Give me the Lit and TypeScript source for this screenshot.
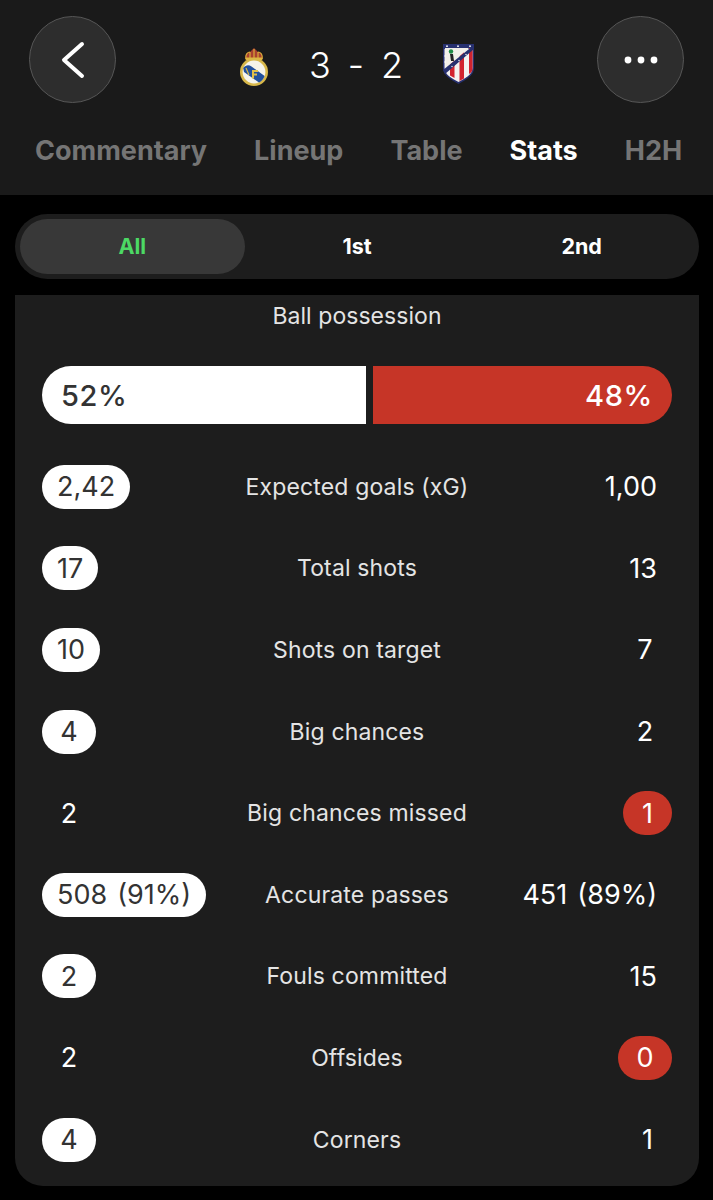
import { LitElement, html, css, svg } from "lit";
import { customElement } from "lit/decorators.js";

type Row = { label: string; a: string; b: string; hl?: "a" | "b" };
const rows: Row[] = [
  { label: "Expected goals (xG)", a: "2,42", b: "1,00", hl: "a" },
  { label: "Total shots", a: "17", b: "13", hl: "a" },
  { label: "Shots on target", a: "10", b: "7", hl: "a" },
  { label: "Big chances", a: "4", b: "2", hl: "a" },
  { label: "Big chances missed", a: "2", b: "1", hl: "b" },
  { label: "Accurate passes", a: "508 (91%)", b: "451 (89%)", hl: "a" },
  { label: "Fouls committed", a: "2", b: "15", hl: "a" },
  { label: "Offsides", a: "2", b: "0", hl: "b" },
  { label: "Corners", a: "4", b: "1", hl: "a" },
];

const realMadrid = svg`<svg class="crest-rm" viewBox="0 0 30 39" width="30" height="39">
  <path d="M7 13 C5.5 7 9 5 11 5 L13 3 L15 1 L17 3 L19 5 C21 5 24.5 7 23 13 Z" fill="#a8402f"/>
  <path d="M7 12 C6 7 9 5 11 5 M23 12 C24 7 21 5 19 5 M15 2 V11 M11 5 V12 M19 5 V12" stroke="#d9a93a" stroke-width="1.2" fill="none"/>
  <rect x="6.5" y="10.5" width="17" height="2.5" rx="1" fill="#e0b640"/>
  <circle cx="15" cy="25" r="14" fill="#d8b84a"/>
  <circle cx="15" cy="25" r="11.4" fill="#f6f4ea"/>
  <path d="M4.2 21 C7 17.5 10 17.5 12.5 19.5 L25.6 29 C24.5 32 22.5 34.5 20 35.6 L5 25 Z" fill="#22509c"/>
  <path d="M13 23 h6 v2 h-4 v1.5 h3 v2 h-3 v3 h-2 Z" fill="#e2c04a"/>
  <path d="M7 21 l3 7" stroke="#d8b84a" stroke-width="1.2"/>
</svg>`;

const atletico = svg`<svg class="crest-atm" viewBox="0 0 31 40" width="31" height="40">
  <path d="M0 0 H31 V24 C31 32 22 36 15.5 40 C9 36 0 32 0 24 Z" fill="#27306f"/>
  <path d="M1.5 24 V5 H29.5 V24 C29.5 31 21 35 15.5 38 C10 35 1.5 31 1.5 24 Z" fill="#f4f2f0"/>
  <path d="M7 31.5 V4 H11.5 V34 Z M16.5 37 V4 H21 V34.5 Z M26 30 V4 H29.5 V25 C29.5 27 28 29 26 30 Z" fill="#d2232f"/>
  <path d="M2 4 H26 L3 24 Z" fill="#f2efe8"/>
  <circle cx="8" cy="7.5" r="2.2" fill="#1f8a45"/>
  <path d="M7 10 h3 l1 7 h-3 Z" fill="#222"/>
  <path d="M0 26 L31 1 V5 L2 30 Z" fill="#27306f"/>
  <g fill="#fff"><circle cx="4" cy="2.2" r=".9"/><circle cx="15" cy="2.2" r=".9"/><circle cx="27" cy="2.2" r=".9"/><circle cx="2" cy="12" r=".7"/><circle cx="2" cy="18" r=".7"/><circle cx="9" cy="22.5" r=".7"/><circle cx="16" cy="16.5" r=".7"/><circle cx="23" cy="10.5" r=".7"/></g>
</svg>`;

@customElement("app-root")
export class AppRoot extends LitElement {
  static styles = css`
    :host {
      display: block;
      width: 713px;
      height: 1200px;
      overflow: hidden;
      background: #000;
      color: #fff;
      font-family: Inter, "Liberation Sans", sans-serif;
    }
    .header {
      height: 195px;
      box-sizing: border-box;
      background: #1a1a1a;
      padding-top: 16px;
      display: flex;
      flex-direction: column;
    }
    .top {
      display: grid;
      grid-template-columns: 1fr auto 1fr;
      align-items: center;
      padding: 0 29px;
      height: 87px;
    }
    .circle {
      width: 87px;
      height: 87px;
      box-sizing: border-box;
      border-radius: 50%;
      background: #2d2d2d;
      border: 1.5px solid #565656;
      display: flex;
      align-items: center;
      justify-content: center;
    }
    .more {
      justify-self: end;
    }
    .match {
      display: flex;
      align-items: center;
    }
    .crest-rm {
      display: block;
      margin-top: 14px;
    }
    .crest-atm {
      display: block;
      margin-top: 9px;
    }
    .score {
      display: flex;
      justify-content: space-between;
      width: 94px;
      margin: 10px 40px 0 40px;
      font-size: 36px;
      font-weight: 300;
      line-height: 44px;
    }
    .tabs {
      display: flex;
      gap: 47px;
      padding-left: 35px;
      margin-top: 30px;
      font-size: 27px;
      font-weight: 700;
      line-height: 36px;
      color: #757575;
      white-space: nowrap;
    }
    .tabs .on {
      color: #fff;
    }
    .seg {
      margin: 19px 14px 0 15px;
      height: 65px;
      box-sizing: border-box;
      border-radius: 33px;
      background: #1d1d1d;
      padding: 5px;
      display: grid;
      grid-template-columns: repeat(3, 1fr);
      font-size: 21.5px;
      font-weight: 700;
    }
    .seg div {
      display: flex;
      align-items: center;
      justify-content: center;
      border-radius: 28px;
      padding-bottom: 2px;
    }
    .seg .on {
      background: #383838;
      color: #4cd964;
    }
    .card {
      margin: 16px 14px 0 15px;
      height: 891px;
      box-sizing: border-box;
      background: #1d1d1d;
      border-radius: 0 0 28px 28px;
      padding: 1px 27px 0;
    }
    .title {
      text-align: center;
      font-size: 23px;
      line-height: 40px;
      color: #e4e4e4;
      letter-spacing: 0.05px;
    }
    .bar {
      display: flex;
      gap: 7px;
      margin-top: 30px;
      height: 58px;
      font-size: 29px;
      letter-spacing: 0.6px;
      font-weight: 500;
    }
    .bar div {
      display: flex;
      align-items: center;
    }
    .home {
      width: 324px;
      background: #fff;
      color: #333;
      border-radius: 29px 0 0 29px;
      padding-left: 19px;
      box-sizing: border-box;
    }
    .away {
      flex: 1;
      background: #c63527;
      border-radius: 0 29px 29px 0;
      justify-content: flex-end;
      padding-right: 19px;
    }
    .rows {
      margin-top: 22px;
    }
    .row {
      display: grid;
      grid-template-columns: 1fr auto 1fr;
      align-items: center;
      height: 81.6px;
      font-size: 27px;
    }
    .label {
      font-size: 23px;
      color: #e4e4e4;
      letter-spacing: 0.15px;
      text-align: center;
    }
    .val {
      height: 44px;
      min-width: 24px;
      padding: 0 15px;
      border-radius: 22px;
      display: flex;
      align-items: center;
      justify-content: center;
      white-space: nowrap;
      word-spacing: 2.5px;
    }
    .a {
      justify-self: start;
    }
    .b {
      justify-self: end;
    }
    .one {
      min-width: 19px;
    }
    .hl-a {
      background: #fff;
      color: #333;
    }
    .hl-b {
      background: #c63527;
    }
  `;

  render() {
    return html`
      <div class="header">
        <div class="top">
          <div class="circle">
            <svg width="26" height="38" viewBox="0 0 26 38">
              <path d="M22 3 L4 19 L22 35" fill="none" stroke="#fff" stroke-width="4" stroke-linecap="round" stroke-linejoin="round" />
            </svg>
          </div>
          <div class="match">
            ${realMadrid}
            <div class="score"><span>3</span><span>-</span><span>2</span></div>
            ${atletico}
          </div>
          <div class="circle more">
            <svg width="34" height="8" viewBox="0 0 34 8">
              <circle cx="4" cy="4" r="3.4" fill="#fff" /><circle cx="17" cy="4" r="3.4" fill="#fff" /><circle cx="30" cy="4" r="3.4" fill="#fff" />
            </svg>
          </div>
        </div>
        <div class="tabs">
          <span>Commentary</span><span>Lineup</span><span>Table</span><span class="on">Stats</span><span>H2H</span>
        </div>
      </div>
      <div class="seg"><div class="on">All</div><div>1st</div><div>2nd</div></div>
      <div class="card">
        <div class="title">Ball possession</div>
        <div class="bar"><div class="home">52%</div><div class="away">48%</div></div>
        <div class="rows">
          ${rows.map(
            (r) => html`<div class="row">
              <div class="val a ${r.hl === "a" ? "hl-a" : ""}">${r.a}</div>
              <div class="label">${r.label}</div>
              <div class="val b ${r.hl === "b" ? "hl-b" : ""} ${r.b === "1" ? "one" : ""}">${r.b}</div>
            </div>`
          )}
        </div>
      </div>
    `;
  }
}
